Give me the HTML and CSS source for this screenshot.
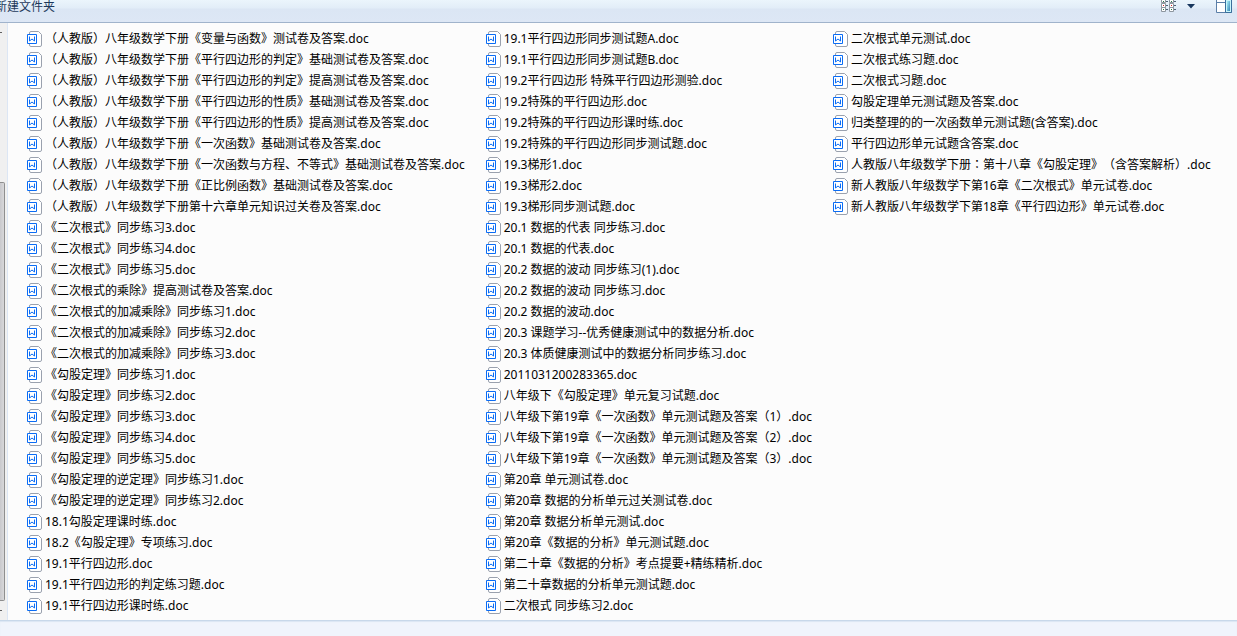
FILE: index.html
```
<!DOCTYPE html>
<html lang="zh-CN">
<head>
  <meta charset="UTF-8">
  <meta name="viewport" content="width=device-width, initial-scale=1.0">
  <title>文件夹</title>
  <link rel="stylesheet" href="styles.css">
</head>
<body>

  <header class="toolbar">
    <button type="button" class="new-folder">新建文件夹</button>
    <div class="view-tools">
      <button type="button" class="tool-button" aria-label="更改您的视图">
        <svg width="16" height="13" viewBox="0 0 16 13">
          <g fill="#fff" stroke="#8d969f">
            <path d="M.5 -2.5h4v5h-4zM.5 3.5h4v4h-4zM.5 7.5h4v4h-4zM8.5 -2.5h4v5h-4zM8.5 3.5h4v4h-4zM8.5 7.5h4v4h-4z"/>
          </g>
          <path fill="#d02020" d="M2 5h1v1H2zM10 5h1v1h-1z"/>
          <path fill="#2a7a4a" d="M2 1h1v1H2zM2 9h1v1H2zM10 1h1v1h-1zM10 9h1v1h-1z"/>
          <path fill="#4d6377" d="M5 1h2v1H5zM5 5h2v1H5zM5 9h2v1H5zM13 1h2v1h-2zM13 5h2v1h-2zM13 9h2v1h-2z"/>
        </svg>
      </button>
      <button type="button" class="tool-button more" aria-label="更多选项">
        <svg width="8" height="13" viewBox="0 0 8 13"><path fill="#17365d" d="M0 4h8L4 8.500z"/></svg>
      </button>
      <button type="button" class="tool-button preview" aria-label="显示预览窗格">
        <svg width="16" height="13" viewBox="0 0 16 13">
          <defs>
            <linearGradient id="pane" x1="0" y1="0" x2="1" y2="1">
              <stop offset="0" stop-color="#a8f0f8"/>
              <stop offset="1" stop-color="#3a86b8"/>
            </linearGradient>
          </defs>
          <path fill="#fff" stroke="#5b7fa8" d="M.5 -2.500h15v15h-15z"/>
          <path stroke="#5b7fa8" d="M1 2.500h8"/>
          <path fill="#c9f6fb" stroke="#3a6f9c" d="M9.500 -2.500h6v15h-6z"/>
          <path fill="url(#pane)" d="M11 1h3v10h-3z"/>
        </svg>
      </button>
    </div>
  </header>

  <main class="content">
    <div class="scrollbar">
      <div class="scroll-arrow up"></div>
      <div class="scroll-thumb"></div>
      <div class="scroll-arrow down"></div>
    </div>
    <ul class="file-list" id="file-list"></ul>
  </main>

  <footer class="details"></footer>

  <script src="script.js"></script>
</body>
</html>
```

FILE: styles.css
```
* {
  box-sizing: border-box;
}
body {
  margin: 0;
  height: 100vh;
  display: flex;
  flex-direction: column;
  overflow: hidden;
  background-color: #f0f4fc;
  color: #000;
  font-family: "Noto Sans", "Noto Sans CJK SC", sans-serif;
  font-size: 12px;
  text-spacing-trim: space-all;
}
button {
  padding: 0;
  border: none;
  background: none;
  font: inherit;
}
.toolbar {
  display: flex;
  justify-content: space-between;
  align-items: flex-start;
  height: 23px;
  border-bottom: 1px solid #a0b3cb;
  background: linear-gradient(#ebf5fc, #e2edf8 8px, #dbe6f4 9px, #dde7f5);
}
.new-folder {
  margin-left: -5px;
  line-height: 14px;
  color: #1e395b;
}
.view-tools {
  display: flex;
  padding-right: 5px;
}
.tool-button svg {
  display: block;
}
.more {
  margin-left: 10px;
}
.preview {
  margin-left: 21px;
}
.content {
  flex: 1;
  display: flex;
  min-height: 0;
  background-color: #fcfcfc;
}
.scrollbar {
  display: flex;
  flex-direction: column;
  width: 8px;
  padding-right: 2px;
  border-right: 1px solid #dce6f4;
  background-color: #f0f0f0;
}
.scroll-arrow {
  height: 19px;
}
.scroll-arrow::before {
  content: "";
  display: block;
  width: 2px;
  height: 1px;
  margin-top: 9px;
  background-color: #606060;
}
.scroll-arrow.up {
  flex: 0 0 159px;
}
.scroll-thumb {
  flex: 1;
  border: 1px solid #8e8e8e;
  border-left: none;
  border-radius: 0 2px 2px 0;
  background: linear-gradient(90deg, #c8c8cc, #d8d8da);
}
.file-list {
  display: grid;
  grid-template-rows: repeat(28, 21px);
  grid-auto-flow: column;
  grid-auto-columns: max-content;
  column-gap: 21px;
  margin: 0;
  padding: 5px 0 4px 19px;
  list-style: none;
}
.file-list li {
  display: flex;
  align-items: center;
  gap: 2px;
  line-height: 21px;
  white-space: pre;
}
/* 全角括号和冒号居中显示 */
.punct {
  font-family: "Noto Sans CJK TC", sans-serif;
  line-height: 1;
}
.details {
  height: 16px;
  border-top: 1px solid #c8d8ea;
  box-shadow: inset 0 1px 1px #dbe6f3;
}
```

FILE: script.js
```
const files = [
  '（人教版）八年级数学下册《变量与函数》测试卷及答案.doc',
  '（人教版）八年级数学下册《平行四边形的判定》基础测试卷及答案.doc',
  '（人教版）八年级数学下册《平行四边形的判定》提高测试卷及答案.doc',
  '（人教版）八年级数学下册《平行四边形的性质》基础测试卷及答案.doc',
  '（人教版）八年级数学下册《平行四边形的性质》提高测试卷及答案.doc',
  '（人教版）八年级数学下册《一次函数》基础测试卷及答案.doc',
  '（人教版）八年级数学下册《一次函数与方程、不等式》基础测试卷及答案.doc',
  '（人教版）八年级数学下册《正比例函数》基础测试卷及答案.doc',
  '（人教版）八年级数学下册第十六章单元知识过关卷及答案.doc',
  '《二次根式》同步练习3.doc',
  '《二次根式》同步练习4.doc',
  '《二次根式》同步练习5.doc',
  '《二次根式的乘除》提高测试卷及答案.doc',
  '《二次根式的加减乘除》同步练习1.doc',
  '《二次根式的加减乘除》同步练习2.doc',
  '《二次根式的加减乘除》同步练习3.doc',
  '《勾股定理》同步练习1.doc',
  '《勾股定理》同步练习2.doc',
  '《勾股定理》同步练习3.doc',
  '《勾股定理》同步练习4.doc',
  '《勾股定理》同步练习5.doc',
  '《勾股定理的逆定理》同步练习1.doc',
  '《勾股定理的逆定理》同步练习2.doc',
  '18.1勾股定理课时练.doc',
  '18.2《勾股定理》专项练习.doc',
  '19.1平行四边形.doc',
  '19.1平行四边形的判定练习题.doc',
  '19.1平行四边形课时练.doc',
  '19.1平行四边形同步测试题A.doc',
  '19.1平行四边形同步测试题B.doc',
  '19.2平行四边形 特殊平行四边形测验.doc',
  '19.2特殊的平行四边形.doc',
  '19.2特殊的平行四边形课时练.doc',
  '19.2特殊的平行四边形同步测试题.doc',
  '19.3梯形1.doc',
  '19.3梯形2.doc',
  '19.3梯形同步测试题.doc',
  '20.1 数据的代表 同步练习.doc',
  '20.1 数据的代表.doc',
  '20.2 数据的波动 同步练习(1).doc',
  '20.2 数据的波动 同步练习.doc',
  '20.2 数据的波动.doc',
  '20.3 课题学习--优秀健康测试中的数据分析.doc',
  '20.3 体质健康测试中的数据分析同步练习.doc',
  '2011031200283365.doc',
  '八年级下《勾股定理》单元复习试题.doc',
  '八年级下第19章《一次函数》单元测试题及答案（1）.doc',
  '八年级下第19章《一次函数》单元测试题及答案（2）.doc',
  '八年级下第19章《一次函数》单元测试题及答案（3）.doc',
  '第20章 单元测试卷.doc',
  '第20章 数据的分析单元过关测试卷.doc',
  '第20章 数据分析单元测试.doc',
  '第20章《数据的分析》单元测试题.doc',
  '第二十章《数据的分析》考点提要+精练精析.doc',
  '第二十章数据的分析单元测试题.doc',
  '二次根式 同步练习2.doc',
  '二次根式单元测试.doc',
  '二次根式练习题.doc',
  '二次根式习题.doc',
  '勾股定理单元测试题及答案.doc',
  '归类整理的的一次函数单元测试题(含答案).doc',
  '平行四边形单元试题含答案.doc',
  '人教版八年级数学下册：第十八章《勾股定理》（含答案解析）.doc',
  '新人教版八年级数学下第16章《二次根式》单元试卷.doc',
  '新人教版八年级数学下第18章《平行四边形》单元试卷.doc'
];

// Word 文档图标
const icon = `<svg width="16" height="16" viewBox="0 0 16 16" fill="none">
  <path fill="#fff" stroke="#9aa1ae" d="M2.500 3V2Q2.500 .5 4 .5h7.500l3 3V14q0 1.500-1.500 1.500H4q-1.500 0-1.500-1.500v-1"/>
  <path fill="#fff" stroke="#0a6cf5" d="M.5 3.500h9v9h-9z"/>
  <path stroke="#0a6cf5" d="M2.500 5.500v4.500l2.500-2 2.500 2V5.500"/>
</svg>`;

const list = document.getElementById('file-list');
files.forEach(name => {
  const li = document.createElement('li');
  const label = name.replace(/[（）：]/g, '<span class="punct" lang="zh-TW">$&</span>');
  li.innerHTML = icon + '<span>' + label + '</span>';
  list.appendChild(li);
});
```
